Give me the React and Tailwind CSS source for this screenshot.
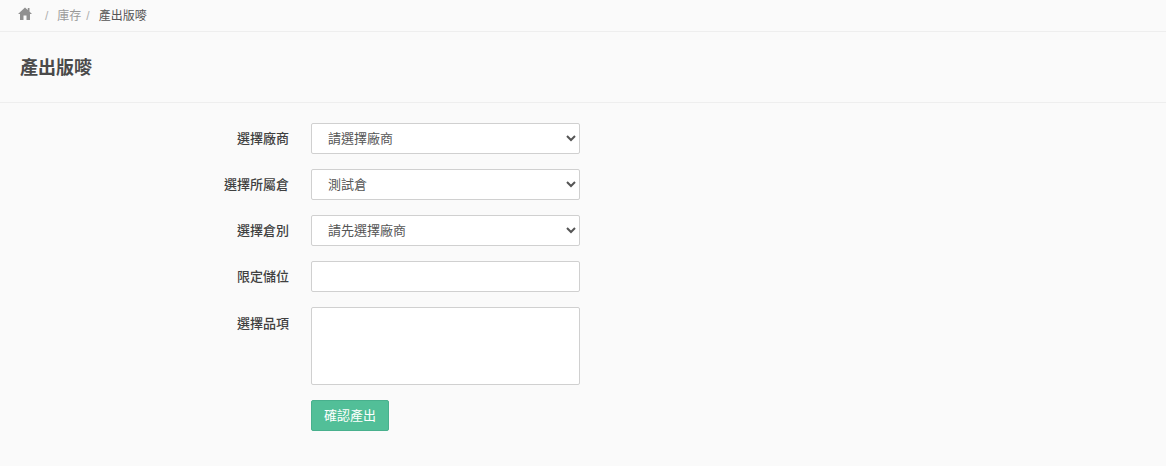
const Row = ({ label, children, top }) => (
  <div className="flex mb-[15px]">
    <label className={`w-[289px] shrink-0 text-right text-[13px] leading-[19px] font-medium text-[#404040] ${top ? 'pt-[7px]' : 'pt-[6px]'}`}>
      {label}
    </label>
    <div className="ml-[22px] w-[269px]">{children}</div>
  </div>
);

const Select = ({ value }) => (
  <select
    defaultValue={value}
    className="block h-[31px] w-full rounded-[2px] border border-[#d0d0d0] bg-white pl-3 text-[13px] text-[#555555]"
  >
    <option>{value}</option>
  </select>
);

const App = () => {
  return (
    <div className="h-[466px] w-[1166px] overflow-hidden bg-[#fafafa] font-['Liberation_Sans','Noto_Sans_CJK_TC',sans-serif]">
      <div className="flex h-[32px] items-center border-b border-[#eeeeee] pl-[18px] text-[12px]">
        <svg width="14" height="13" viewBox="0 0 14 13" className="mb-[4px] fill-[#909090]">
          <path d="M7 0.5 L0 7 H2 V13 H5.5 V8.5 H8.5 V13 H12 V7 H14 L11.5 4.6 V1 H9.8 V3 Z" />
        </svg>
        <span className="ml-[13px] text-[#b0b0b0]">/</span>
        <span className="ml-[9px] text-[#999999]">庫存</span>
        <span className="ml-[5px] text-[#b0b0b0]">/</span>
        <span className="ml-[9px] text-[#555555]">產出版嘜</span>
      </div>
      <div className="flex h-[71px] items-center border-b border-[#eeeeee] pl-5 pt-[3px]">
        <h1 className="text-[18px] font-semibold text-[#4a4a4a]">產出版嘜</h1>
      </div>
      <div className="pt-5">
        <Row label="選擇廠商"><Select value="請選擇廠商" /></Row>
        <Row label="選擇所屬倉"><Select value="測試倉" /></Row>
        <Row label="選擇倉別"><Select value="請先選擇廠商" /></Row>
        <Row label="限定儲位">
          <input className="block h-[31px] w-full rounded-[2px] border border-[#d0d0d0] bg-white" />
        </Row>
        <Row label="選擇品項" top>
          <textarea className="block h-[78px] w-full resize-none rounded-[2px] border border-[#d0d0d0] bg-white" />
        </Row>
        <div className="ml-[311px]">
          <button className="h-[31px] w-[78px] rounded-[2px] border border-[#48b08d] bg-[#52bf98] text-[13px] text-white">
            確認產出
          </button>
        </div>
      </div>
    </div>
  );
};

export default App;
